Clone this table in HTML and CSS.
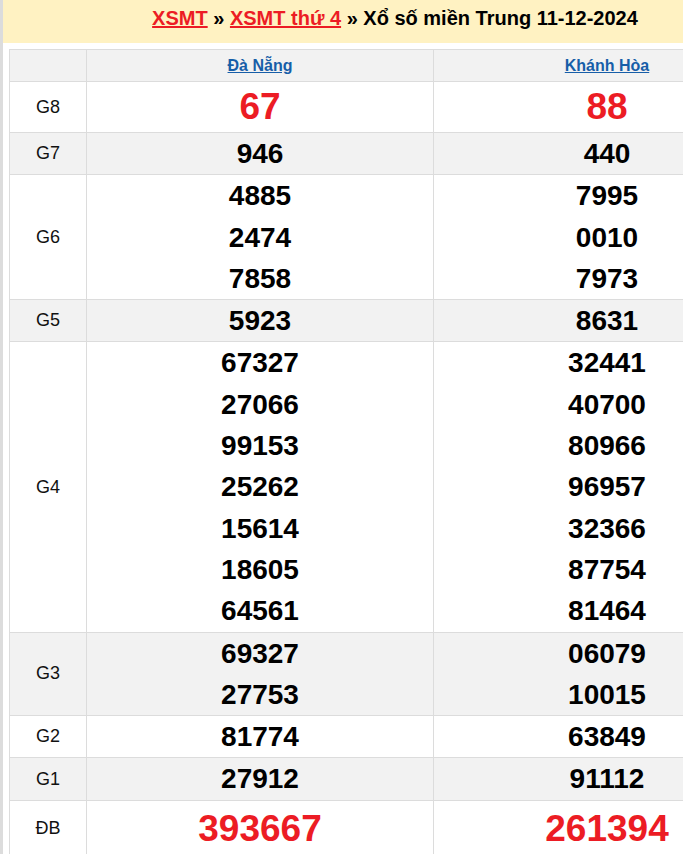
FILE: index.html
```html
<!DOCTYPE html>
<html lang="vi">
<head>
<meta charset="utf-8">
<title>XSMT thứ 4 - Xổ số miền Trung 11-12-2024</title>
<link rel="stylesheet" href="styles.css">
</head>
<body>
<div class="box">
  <h2 class="title"><a href="#">XSMT</a> » <a href="#">XSMT thứ 4</a> » Xổ số miền Trung 11-12-2024</h2>
  <table class="result">
    <colgroup><col class="c-label"><col class="c-prov"><col class="c-prov"></colgroup>
    <thead>
      <tr class="alt">
        <th></th>
        <th><a href="#">Đà Nẵng</a></th>
        <th><a href="#">Khánh Hòa</a></th>
      </tr>
    </thead>
    <tbody>
      <tr class="g8">
        <td class="lbl">G8</td>
        <td class="red">67</td>
        <td class="red">88</td>
      </tr>
      <tr class="alt">
        <td class="lbl">G7</td>
        <td class="num"><div>946</div></td>
        <td class="num"><div>440</div></td>
      </tr>
      <tr>
        <td class="lbl">G6</td>
        <td class="num"><div>4885</div><div>2474</div><div>7858</div></td>
        <td class="num"><div>7995</div><div>0010</div><div>7973</div></td>
      </tr>
      <tr class="alt">
        <td class="lbl">G5</td>
        <td class="num"><div>5923</div></td>
        <td class="num"><div>8631</div></td>
      </tr>
      <tr>
        <td class="lbl">G4</td>
        <td class="num"><div>67327</div><div>27066</div><div>99153</div><div>25262</div><div>15614</div><div>18605</div><div>64561</div></td>
        <td class="num"><div>32441</div><div>40700</div><div>80966</div><div>96957</div><div>32366</div><div>87754</div><div>81464</div></td>
      </tr>
      <tr class="alt">
        <td class="lbl">G3</td>
        <td class="num"><div>69327</div><div>27753</div></td>
        <td class="num"><div>06079</div><div>10015</div></td>
      </tr>
      <tr>
        <td class="lbl">G2</td>
        <td class="num"><div>81774</div></td>
        <td class="num"><div>63849</div></td>
      </tr>
      <tr class="alt">
        <td class="lbl">G1</td>
        <td class="num"><div>27912</div></td>
        <td class="num"><div>91112</div></td>
      </tr>
      <tr class="db">
        <td class="lbl">ĐB</td>
        <td class="red">393667</td>
        <td class="red">261394</td>
      </tr>
    </tbody>
  </table>
</div>
</body>
</html>
```

FILE: styles.css
```css
html, body {
  margin: 0;
  padding: 0;
  overflow: hidden;
  background: #fff;
}

body {
  font-family: "Liberation Sans", Arial, sans-serif;
  color: #000;
}

.box {
  width: 784px;
  border-left: 3px solid #dcdcdc;
  min-height: 854px;
}

.title {
  margin: 0;
  background: #fff2c2;
  font-size: 20px;
  line-height: 24px;
  font-weight: bold;
  text-align: center;
  padding: 6px 0 13px;
  color: #000;
}

.title a {
  color: #ec1c24;
  text-decoration: underline;
}

.result {
  margin: 6px 6px 0;
  width: 772px;
  border-collapse: collapse;
  table-layout: fixed;
}

.c-label { width: 77px; }
.c-prov { width: 347px; }

.result th,
.result td {
  border: 1px solid #dcdcdc;
  padding: 0;
  text-align: center;
  vertical-align: middle;
}

.result th {
  height: 31px;
  font-size: 16px;
  font-weight: bold;
}

.result th a {
  color: #175ea8;
  text-decoration: underline;
}

.alt th,
.alt td {
  background: #f2f2f2;
}

.lbl {
  font-size: 18px;
  color: #111;
}

.num {
  font-size: 28px;
  font-weight: bold;
  line-height: 41.3px;
}

.red {
  color: #ec1c24;
  font-size: 37px;
  font-weight: bold;
}

.g8 td {
  height: 50px;
}

.db td {
  height: 56px;
}
```
